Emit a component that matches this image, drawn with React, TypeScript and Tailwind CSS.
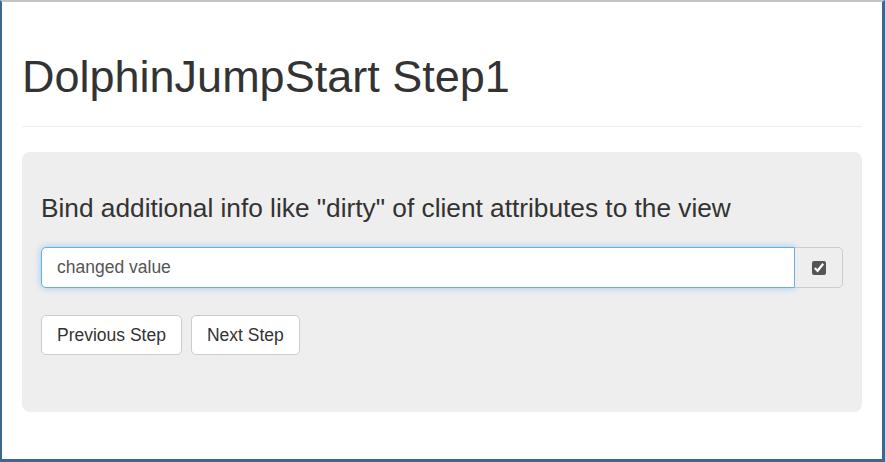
import React, { useState } from 'react';

export default function App() {
    const [value, setValue] = useState('changed value');
    const [dirty, setDirty] = useState(true);

    return (
        <div
            className="w-[885px] h-[462px] bg-white overflow-hidden border-l-2 border-r-[3px] border-b-[3px] border-t-2 border-l-[#3b6892] border-r-[#3b6892] border-b-[#3b6892] border-t-[#c4c4c4]"
            style={{ fontFamily: '"Liberation Sans", Arial, sans-serif' }}
        >
            <div className="px-5">
                <div className="mt-[50px] mb-[25px] pb-[25px] border-b border-[#eeeeee]">
                    <h1 className="text-[45px] leading-[49px] text-[#333333]">DolphinJumpStart Step1</h1>
                </div>

                <div className="bg-[#eeeeee] rounded-[8px] px-[19px] pt-[38px] pb-[57px]">
                    <p className="text-[26.25px] leading-[37px] text-[#333333] mb-[20px]">
                        Bind additional info like "dirty" of client attributes to the view
                    </p>

                    <div className="flex h-[41px]">
                        <input
                            value={value}
                            onChange={(e) => {
                                setValue(e.target.value);
                                setDirty(true);
                            }}
                            className="flex-1 h-full px-[15px] text-[17.5px] text-[#555555] bg-white border border-[#66afe9] rounded-l-[5px] outline-none shadow-[0_0_7px_rgba(102,175,233,0.6)]"
                            style={{ fontFamily: '"Liberation Sans", Arial, sans-serif' }}
                        />
                        <div className="w-[48px] h-full flex items-center justify-center bg-[#eeeeee] border border-l-0 border-[#cccccc] rounded-r-[5px]">
                            <input
                                type="checkbox"
                                checked={dirty}
                                onChange={(e) => setDirty(e.target.checked)}
                                className="w-[14px] h-[14px] accent-[#555555]"
                            />
                        </div>
                    </div>

                    <div className="flex gap-[9px] mt-[27px]">
                        <button className="h-[40px] px-[15px] bg-white border border-[#cccccc] rounded-[5px] text-[17.5px] text-[#333333]">
                            Previous Step
                        </button>
                        <button className="h-[40px] px-[15px] bg-white border border-[#cccccc] rounded-[5px] text-[17.5px] text-[#333333]">
                            Next Step
                        </button>
                    </div>
                </div>
            </div>
        </div>
    );
}
